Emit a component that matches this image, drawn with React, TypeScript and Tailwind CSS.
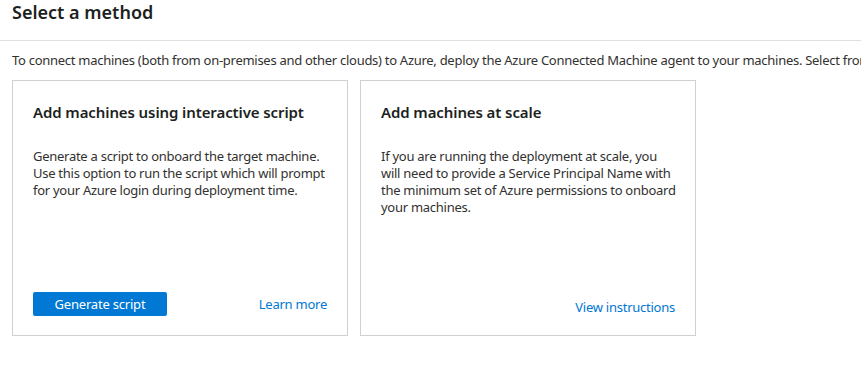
import React from 'react';

interface MethodCard {
  title: string;
  lines: string[];
  button?: string;
  link: string;
}

const cards: MethodCard[] = [
  {
    title: 'Add machines using interactive script',
    lines: [
      'Generate a script to onboard the target machine.',
      'Use this option to run the script which will prompt',
      'for your Azure login during deployment time.',
    ],
    button: 'Generate script',
    link: 'Learn more',
  },
  {
    title: 'Add machines at scale',
    lines: [
      'If you are running the deployment at scale, you',
      'will need to provide a Service Principal Name with',
      'the minimum set of Azure permissions to onboard',
      'your machines.',
    ],
    link: 'View instructions',
  },
];

export default function App() {
  return (
    <div className="w-[861px] h-[375px] overflow-hidden bg-white text-[#323130] font-['Segoe_UI','Noto_Sans',sans-serif]">
      {/* Header */}
      <div className="h-[41px] border-b border-[#e1dfdd] px-3">
        <h1 className="text-[18px] leading-[24px] font-semibold text-[#201f1e]">Select a method</h1>
      </div>

      {/* Intro */}
      <p className="px-3 pt-[11px] text-[13px] leading-[17px] tracking-[-0.28px] whitespace-nowrap overflow-hidden">
        To connect machines (both from on-premises and other clouds) to Azure, deploy the Azure Connected Machine agent to your machines. Select from the following options.
      </p>

      {/* Cards */}
      <div className="flex gap-3 px-3 mt-[11px]">
        {cards.map((card) => (
          <div
            key={card.title}
            className="w-[336px] h-[256px] border border-[#d2d0ce] flex flex-col px-[20px] pt-[21px] pb-[19px]"
          >
            <h2 className="text-[15px] leading-[20px] font-semibold tracking-[-0.1px] text-[#201f1e]">{card.title}</h2>
            <p className="mt-[26px] text-[13px] leading-[17px] tracking-[-0.27px] whitespace-nowrap">
              {card.lines.map((line, i) => (
                <span key={i} className="block">{line}</span>
              ))}
            </p>
            <div className="mt-auto flex items-center justify-between">
              {card.button ? (
                <button className="w-[134px] h-[24px] bg-[#0078d4] text-white text-[13px] leading-[17px] tracking-[-0.2px] rounded-[2px]">
                  {card.button}
                </button>
              ) : (
                <span />
              )}
              <a className="text-[#0078d4] text-[13px] leading-[17px] tracking-[-0.25px] cursor-pointer">{card.link}</a>
            </div>
          </div>
        ))}
      </div>
    </div>
  );
}
